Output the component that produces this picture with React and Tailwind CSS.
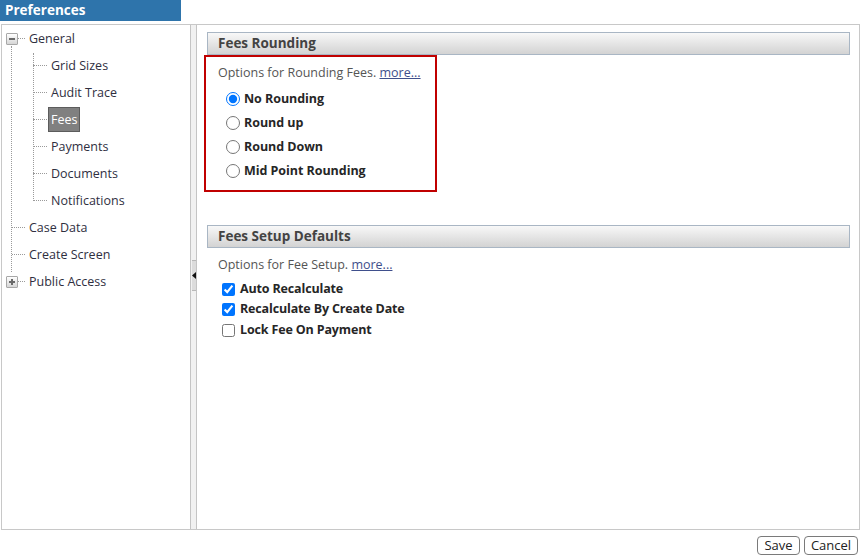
import React from 'react';

const font = { fontFamily: '"Open Sans", "Noto Sans", sans-serif' };

const Expander = ({ open }) => (
  <span className="flex h-[12px] w-[12px] items-center justify-center rounded-[1px] border border-[#a8a8a8] bg-gradient-to-b from-[#ffffff] to-[#d6d6d6]">
    <span className="relative block h-[2px] w-[6px] bg-[#6a6a6a]">
      {!open && <span className="absolute left-[2px] top-[-2px] block h-[6px] w-[2px] bg-[#6a6a6a]" />}
    </span>
  </span>
);

const Label = ({ children, selected }) => (
  <span
    className={
      'ml-[1px] border px-[2px] py-[3px] leading-[17px] ' +
      (selected ? 'border-[#5c5c5c] bg-[#808080] text-white' : 'border-transparent text-[#2f2f3f]')
    }
  >
    {children}
  </span>
);

const HLine = ({ className }) => <span className={'block border-t border-dotted border-[#9a9a9a] ' + className} />;

const TopRow = ({ label, expander, open }) => (
  <div className="flex h-[27px] items-center pl-[4px]">
    {expander ? (
      <>
        <Expander open={open} />
        <HLine className="w-[7px]" />
      </>
    ) : (
      <>
        <span className="w-[6px]" />
        <HLine className="w-[13px]" />
      </>
    )}
    <Label>{label}</Label>
  </div>
);

const ChildRow = ({ label, selected }) => (
  <div className="flex h-[27px] items-center pl-[31px]">
    <HLine className="w-[14px]" />
    <Label selected={selected}>{label}</Label>
  </div>
);

const SectionHeader = ({ children, className = '' }) => (
  <div
    className={
      'flex h-[23px] items-center border border-[#a9b6c4] bg-gradient-to-b from-[#f8f8f8] to-[#d3d3d3] pl-[10px] text-[13.5px] font-bold text-[#434343] ' +
      className
    }
  >
    {children}
  </div>
);

const MoreLink = () => (
  <a href="#" className="text-[#3f4f8c] underline">
    more...
  </a>
);

const rounding = ['No Rounding', 'Round up', 'Round Down', 'Mid Point Rounding'];
const setup = [
  { label: 'Auto Recalculate', checked: true },
  { label: 'Recalculate By Create Date', checked: true },
  { label: 'Lock Fee On Payment', checked: false },
];

export default function App() {
  return (
    <div className="h-[556px] w-[861px] overflow-hidden bg-white text-[12.5px]" style={font}>
      <div className="h-[21px] w-[181px] bg-[#2e74ab] pl-[5px] text-[13.5px] font-bold leading-[21px] text-white">
        Preferences
      </div>

      <div className="mx-[1px] mt-[3px] flex h-[506px] border border-[#c8c8c8]">
        {/* tree */}
        <div className="relative w-[188px] shrink-0">
          <span className="absolute left-[9px] top-[21px] h-[226px] border-l border-dotted border-[#9a9a9a]" />
          <span className="absolute left-[31px] top-[28px] h-[148px] border-l border-dotted border-[#9a9a9a]" />
          <TopRow label="General" expander open />
          <ChildRow label="Grid Sizes" />
          <ChildRow label="Audit Trace" />
          <ChildRow label="Fees" selected />
          <ChildRow label="Payments" />
          <ChildRow label="Documents" />
          <ChildRow label="Notifications" />
          <TopRow label="Case Data" />
          <TopRow label="Create Screen" />
          <TopRow label="Public Access" expander />
        </div>

        {/* splitter */}
        <div className="flex w-[7px] shrink-0 items-center border-x border-[#c4c4c4] bg-[#f1f1f1]">
          <div className="-mt-[4px] ml-[1px] flex h-[31px] w-[4px] items-center justify-center border-y border-[#b8b8b8] bg-[#dcdcdc]">
            <svg width="4" height="7" viewBox="0 0 4 7">
              <path d="M0 3.5 L4 0 L4 7 Z" fill="#111" />
            </svg>
          </div>
        </div>

        {/* content */}
        <div className="flex-1 pl-[10px] pr-[9px] pt-[7px]">
          <SectionHeader>Fees Rounding</SectionHeader>
          <div className="-ml-[3px] w-[233px] border-2 border-[#c00000] pb-[7px] pl-[12px] pt-[7px]">
            <div className="leading-[17px] text-[#555]">
              Options for Rounding Fees. <MoreLink />
            </div>
            <div className="mt-[6px] pl-[8px]">
              {rounding.map((r, i) => (
                <label
                  key={r}
                  className="flex h-[24px] items-center gap-[4px] font-bold tracking-[-0.05px] text-[#262626]"
                >
                  <input
                    type="radio"
                    name="rounding"
                    defaultChecked={i === 0}
                    className="m-0 h-[14px] w-[14px] accent-[#0075ff]"
                  />
                  {r}
                </label>
              ))}
            </div>
          </div>

          <SectionHeader className="mt-[33px]">Fees Setup Defaults</SectionHeader>
          <div className="pl-[11px] pt-[8px]">
            <div className="leading-[17px] text-[#555]">
              Options for Fee Setup. <MoreLink />
            </div>
            <div className="mt-[6px] pl-[4px]">
              {setup.map((s) => (
                <label
                  key={s.label}
                  className="flex h-[20.5px] items-center gap-[5px] font-bold tracking-[-0.15px] text-[#262626]"
                >
                  <input
                    type="checkbox"
                    defaultChecked={s.checked}
                    className="m-0 h-[13px] w-[13px] accent-[#0075ff]"
                  />
                  {s.label}
                </label>
              ))}
            </div>
          </div>
        </div>
      </div>

      <div className="flex justify-end gap-[4px] pr-[3px] pt-[6px]">
        <button className="h-[19px] w-[43px] rounded-[4px] border border-[#7a7a7a] bg-white text-[13px] leading-[17px] text-[#222]">
          Save
        </button>
        <button className="h-[19px] w-[54px] rounded-[4px] border border-[#7a7a7a] bg-white text-[13px] leading-[17px] text-[#222]">
          Cancel
        </button>
      </div>
    </div>
  );
}
